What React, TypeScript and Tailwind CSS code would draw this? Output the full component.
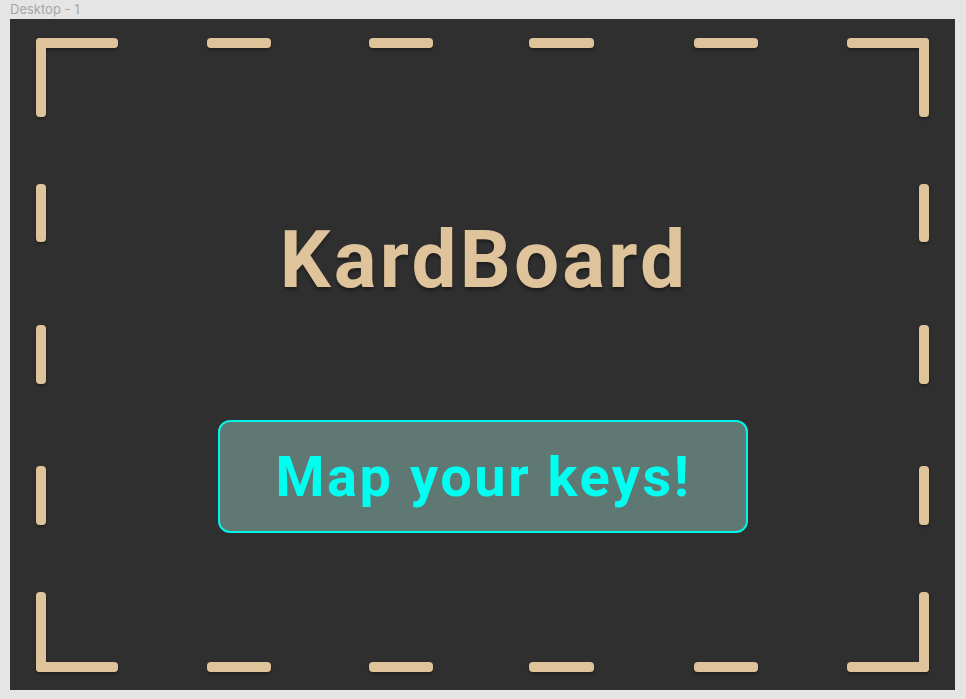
import React from 'react';

const BAR = '#dfc39a';

const Frame = () => {
  const h = [26, 197, 359, 519, 684, 837];
  const hw = [82, 64, 64, 65, 64, 82];
  const v = [19, 165, 306, 447, 573];
  const vh = [79, 58, 59, 59, 80];
  return (
    <svg className="absolute inset-0" width="945" height="671" viewBox="0 0 945 671">
      <defs>
        <filter id="sh" x="-20%" y="-20%" width="140%" height="160%">
          <feDropShadow dx="0" dy="2" stdDeviation="1.5" floodColor="#000" floodOpacity="0.35" />
        </filter>
      </defs>
      <g fill={BAR} filter="url(#sh)">
        {h.map((x, i) => (
          <React.Fragment key={'h' + i}>
            <rect x={x} y={19} width={hw[i]} height={10} rx={4} />
            <rect x={x} y={643} width={hw[i]} height={10} rx={4} />
          </React.Fragment>
        ))}
        {v.map((y, i) => (
          <React.Fragment key={'v' + i}>
            <rect x={26} y={y} width={10} height={vh[i]} rx={4} />
            <rect x={909} y={y} width={10} height={vh[i]} rx={4} />
          </React.Fragment>
        ))}
      </g>
    </svg>
  );
};

const App = () => {
  return (
    <div className="w-[966px] h-[699px] bg-[#e5e5e5] overflow-hidden" style={{ fontFamily: 'Roboto, sans-serif' }}>
      <div className="h-[19px] pl-[10px] pt-[1px] text-[13px] leading-[16px] text-[#a6a6a6]" style={{ fontFamily: 'Inter, sans-serif' }}>
        Desktop - 1
      </div>
      <div className="relative ml-[10px] w-[945px] h-[671px] bg-[#2f2f2f]">
        <Frame />
        <div className="relative flex flex-col items-center pt-[201px]">
          <h1 className="pl-[3px] text-[80px] leading-[80px] font-bold tracking-[3.2px] text-[#dfc39a] [text-shadow:0_3px_3px_rgba(0,0,0,0.35)]">
            KardBoard
          </h1>
          <button className="mt-[120px] flex h-[113px] w-[530px] items-center justify-center rounded-[12px] border-2 border-[#00f5e6] bg-[#5f7874]">
            <span className="pl-[2px] text-[56px] leading-[56px] font-bold tracking-[2.5px] text-[#00fff0]">Map your keys!</span>
          </button>
        </div>
      </div>
    </div>
  );
};

export default App;
